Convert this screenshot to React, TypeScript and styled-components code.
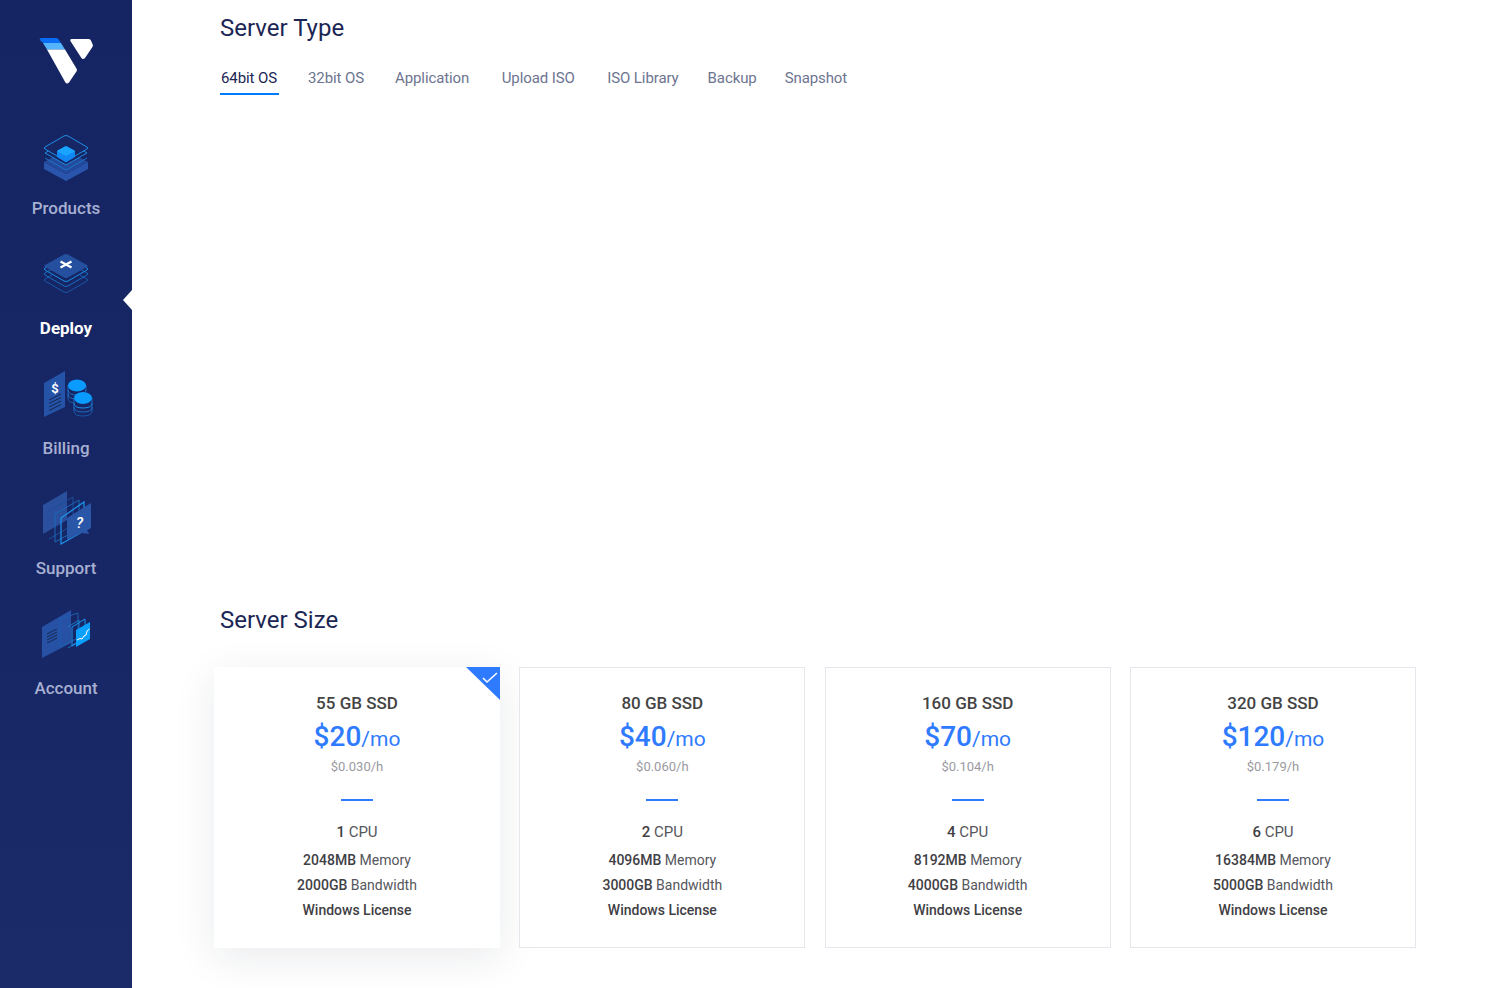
import React from "react";
import styled, { createGlobalStyle } from "styled-components";

const Global = createGlobalStyle`
  html, body { margin: 0; padding: 0; background: #fff; font-family: Roboto, "Liberation Sans", sans-serif; }
  body { overflow: hidden; }
`;

const Shell = styled.div`
  display: flex;
  height: 988px;
  width: 1500px;
`;

const Sidebar = styled.nav`
  width: 132px;
  flex: none;
  display: flex;
  flex-direction: column;
  background: linear-gradient(180deg, #152462 0%, #172664 60%, #1b2b69 100%);
`;

const LogoBox = styled.div`
  height: 120px;
  padding-top: 30px;
  box-sizing: border-box;
  display: flex;
  justify-content: center;
`;

const NavItem = styled.a<{ $active?: boolean }>`
  position: relative;
  height: 120px;
  box-sizing: border-box;
  padding-top: 5px;
  display: flex;
  flex-direction: column;
  align-items: center;
  font-size: 17px;
  font-weight: ${(p) => (p.$active ? 700 : 500)};
  line-height: 20px;
  color: ${(p) => (p.$active ? "#ffffff" : "#a7b0d2")};
  &::after {
    content: "";
    display: ${(p) => (p.$active ? "block" : "none")};
    position: absolute;
    right: 0;
    top: 50px;
    border-style: solid;
    border-width: 10px 9px 10px 0;
    border-color: transparent #ffffff transparent transparent;
  }
`;

const NavIcon = styled.svg`
  width: 70px;
  height: 60px;
  margin: 0 0 13px -2px;
  display: block;
  flex: none;
`;

const LogoSvg = styled.svg`
  width: 70px;
  height: 60px;
  display: block;
  margin-left: -2px;
`;

const Main = styled.main`
  flex: 1;
  padding: 14px 84px 0 88px;
  min-width: 0;
`;

const SectionTitle = styled.h2`
  margin: 0;
  font-size: 24px;
  font-weight: 400;
  line-height: 28px;
  color: #1b2654;
`;

const Tabs = styled.div`
  display: flex;
  margin-top: 20px;
  height: 33px;
`;

const Tab = styled.div<{ $active?: boolean; $gap: number }>`
  box-sizing: border-box;
  padding: 0 2px 0 1px;
  margin-right: ${(p) => p.$gap}px;
  height: 33px;
  line-height: 32px;
  font-size: 15px;
  letter-spacing: -0.1px;
  color: ${(p) => (p.$active ? "#1b2654" : "#6d7490")};
  border-bottom: 2px solid ${(p) => (p.$active ? "#007bfc" : "transparent")};
`;

const OsPanel = styled.div`
  height: 511px;
`;

const Plans = styled.div`
  display: grid;
  grid-template-columns: repeat(4, 286px);
  column-gap: 19.33px;
  margin: 33px 0 0 -6px;
`;

const Plan = styled.div<{ $selected?: boolean }>`
  position: relative;
  height: 281px;
  box-sizing: border-box;
  display: flex;
  flex-direction: column;
  align-items: center;
  background: #fff;
  border: ${(p) => (p.$selected ? "none" : "1px solid #e6e7ec")};
  box-shadow: ${(p) => (p.$selected ? "0 10px 40px rgba(20, 30, 60, 0.09)" : "none")};
  padding-top: ${(p) => (p.$selected ? 26 : 25)}px;
`;

const Corner = styled.svg`
  position: absolute;
  top: 0;
  right: 0;
  width: 34px;
  height: 33px;
`;

const Storage = styled.div`
  font-size: 17px;
  font-weight: 500;
  line-height: 20px;
  color: #444;
`;

const Price = styled.div`
  margin-top: 4px;
  height: 40px;
  line-height: 40px;
  color: #2f7bff;
  font-size: 21px;
  strong {
    font-size: 28px;
    font-weight: 500;
  }
`;

const Hourly = styled.div`
  margin-top: 2px;
  font-size: 13px;
  line-height: 16px;
  color: #9a9a9f;
`;

const Rule = styled.div`
  width: 32px;
  height: 2px;
  margin: 24px 0 19px;
  background: #2f7bff;
`;

const Spec = styled.div<{ $cpu?: boolean }>`
  font-size: ${(p) => (p.$cpu ? 15 : 14)}px;
  line-height: 25px;
  height: ${(p) => (p.$cpu ? 28 : 25)}px;
  color: #55565c;
  strong {
    font-weight: 500;
    color: #3f4045;
  }
`;

const Logo = () => (
  <LogoSvg viewBox="0 0 70 60">
    <path d="M12 8H26.5Q27.5 8 28.2 9L31 13H13.2L9.8 10Q9.2 8 12 8Z" fill="#0a6cf5" />
    <path d="M13 13H31L35 19.5H17Z" fill="#55b4ff" />
    <path d="M17 19.5H35L46.6 38.8Q47.4 40 46.6 41.2L39 52.4Q37 54.4 35.4 52.4Z" fill="#fff" />
    <path d="M41.5 9H58.5Q60 9 60.8 10.2L62.6 14.2Q63.4 15.8 62.4 17L55 28Q53 30 51.4 28L40.4 11Q39.8 9 41.5 9Z" fill="#fff" />
  </LogoSvg>
);

const Icon = ({ children }: { children: React.ReactNode }) => <NavIcon viewBox="0 0 70 60">{children}</NavIcon>;

const ProductsIcon = () => (
  <Icon>
    <path d="M14 37V44L36 56L58 44V37L36 49Z" fill="#2a55ad" />
    <path d="M14 37L36 25L58 37L36 49Z" fill="#234a9c" />
    <g fill="none" strokeWidth="1">
      <path d="M15 33L36 45L57 33" stroke="#1c73c8" />
      <path d="M15 28L36 40L57 28L36 16Z" stroke="#1c8ce0" fill="#172664" />
      <path d="M15 22L34 11Q36 10 38 11L57 22Q58.5 23 57 24L38 35Q36 36 34 35L15 24Q13.5 23 15 22Z" stroke="#1f8fe6" fill="#172664" />
    </g>
    <path d="M27 26V32L36 37.5L45 32V26L36 21Z" fill="#1087f2" />
    <path d="M27.6 25.6L35 21.4Q36 21 37 21.4L44.4 25.6Q45 26 44.4 26.6L37 30.6Q36 31 35 30.6L27.6 26.6Q27 26 27.6 25.6Z" fill="#18a4ff" />
  </Icon>
);

const DeployIcon = () => (
  <Icon>
    <g fill="none" strokeWidth="1">
      <path d="M15 36L34 47Q36 48 38 47L57 36Q58.5 35 57 34L50 30M15 34L22 30M15 34Q13.5 35 15 36" stroke="#1a58a8" />
      <path d="M15 30L34 41Q36 42 38 41L57 30Q58.5 29 57 28L50 24M15 28L22 24M15 28Q13.5 29 15 30" stroke="#1b6cc0" />
      <path d="M15 25L34 36Q36 37 38 36L57 25Q58.5 24 57 23L50 19M15 23L22 19M15 23Q13.5 24 15 25" stroke="#1c90e8" />
    </g>
    <path d="M15 20L34 9.6Q36 8.6 38 9.6L57 20Q58.5 21 57 22L38 32.4Q36 33.4 34 32.4L15 22Q13.5 21 15 20Z" fill="#25509f" />
    <path d="M30.5 16.5L41.5 22.5M41.5 16.5L30.5 22.5" stroke="#fff" strokeWidth="2.2" />
  </Icon>
);

const BillingIcon = () => (
  <Icon>
    <path d="M14 18L35 6V42L14 52Z" fill="#2553a8" />
    <text x="25" y="28" fontFamily="Roboto, sans-serif" fontSize="13" fontWeight="700" fill="#fff" textAnchor="middle">$</text>
    <path d="M19 35L31 29M19 38.5L31 32.5M19 42L31 36M19 45.5L31 39.5" stroke="#15254f" strokeWidth="1" fill="none" />
    <g fill="none" stroke="#1c6cc0" strokeWidth="1">
      <path d="M38 25Q38 30 47 30T56 25" />
      <path d="M38 29Q38 34 47 34T56 29" />
      <path d="M38 33Q38 38 45 38" stroke="#1a58a8" />
      <path d="M38 20V33M56 20V26" />
    </g>
    <ellipse cx="47" cy="20.5" rx="9" ry="6" fill="#0a9bff" />
    <path d="M44 33V46Q44 51 53 51T62 46V33" fill="#172664" />
    <g fill="none" stroke="#1c6cc0" strokeWidth="1">
      <path d="M44 38Q44 43 53 43T62 38" stroke="#1c90e8" />
      <path d="M44 42Q44 47 53 47T62 42" />
      <path d="M44 46Q44 51 53 51T62 46" stroke="#1a58a8" />
      <path d="M44 33V46M62 33V46" />
    </g>
    <ellipse cx="53" cy="33" rx="9" ry="6" fill="#0a9bff" />
  </Icon>
);

const SupportIcon = () => (
  <Icon>
    <path d="M13 20L37 6V35L13 49Z" fill="#2a4f9c" />
    <path d="M19 26L43 12V40L19 54" fill="none" stroke="#1d4f9a" strokeWidth="1" />
    <path d="M25 29L49 15V44L25 57Z" fill="none" stroke="#1b68ba" strokeWidth="1" />
    <path d="M31 33L54 17V46L31 59Z" fill="none" stroke="#1c96ee" strokeWidth="1.2" />
    <path d="M37 33L61 18V43L57 45.5L59.5 49L51 48L37 55Z" fill="#2a56a8" />
    <text x="49.5" y="43" fontFamily="Roboto, sans-serif" fontSize="15" fontWeight="500" fontStyle="italic" fill="#fff" textAnchor="middle">?</text>
  </Icon>
);

const AccountIcon = () => (
  <Icon>
    <path d="M12 22L41 5V38L12 53Z" fill="#2751a4" />
    <path d="M30 14L48 8V33L30 42Z" fill="none" stroke="#1d5fb0" strokeWidth="1" />
    <path d="M38 22L49 15V36L38 43" fill="none" stroke="#1b78cc" strokeWidth="1" />
    <path d="M42 22L55 14V33L42 41Z" fill="none" stroke="#1c96ee" strokeWidth="1" />
    <path d="M46 25L60 17V34L46 42Z" fill="#0aa0ff" />
    <path d="M47 35L50 33.5L52 34L54 31L56 30L57 26L59.5 24" fill="none" stroke="#fff" strokeWidth="1" />
    <path d="M17 29L27 24M17 32L27 27M17 35L27 30M17 38L27 33" stroke="#16284f" strokeWidth="1" fill="none" />
  </Icon>
);

const navItems = [
  { label: "Products", icon: <ProductsIcon /> },
  { label: "Deploy", icon: <DeployIcon />, active: true },
  { label: "Billing", icon: <BillingIcon /> },
  { label: "Support", icon: <SupportIcon /> },
  { label: "Account", icon: <AccountIcon /> },
];

const tabs: [string, number][] = [
  ["64bit OS", 28],
  ["32bit OS", 28],
  ["Application", 29.5],
  ["Upload ISO", 29.5],
  ["ISO Library", 26],
  ["Backup", 25],
  ["Snapshot", 0],
];

const plans = [
  { ssd: "55 GB SSD", price: "$20", hr: "$0.030/h", cpu: 1, mem: "2048MB", bw: "2000GB", selected: true },
  { ssd: "80 GB SSD", price: "$40", hr: "$0.060/h", cpu: 2, mem: "4096MB", bw: "3000GB" },
  { ssd: "160 GB SSD", price: "$70", hr: "$0.104/h", cpu: 4, mem: "8192MB", bw: "4000GB" },
  { ssd: "320 GB SSD", price: "$120", hr: "$0.179/h", cpu: 6, mem: "16384MB", bw: "5000GB" },
];

export default function App() {
  return (
    <Shell>
      <Global />
      <Sidebar>
        <LogoBox>
          <Logo />
        </LogoBox>
        {navItems.map((n) => (
          <NavItem key={n.label} $active={n.active}>
            {n.icon}
            {n.label}
          </NavItem>
        ))}
      </Sidebar>
      <Main>
        <SectionTitle>Server Type</SectionTitle>
        <Tabs>
          {tabs.map(([t, gap], i) => (
            <Tab key={t} $active={i === 0} $gap={gap}>
              {t}
            </Tab>
          ))}
        </Tabs>
        <OsPanel />
        <SectionTitle>Server Size</SectionTitle>
        <Plans>
          {plans.map((p) => (
            <Plan key={p.ssd} $selected={p.selected}>
              {p.selected && (
                <Corner viewBox="0 0 34 33">
                  <path d="M0 0H34V33Z" fill="#2f7bff" />
                  <path d="M17 11L21 15L31 6" fill="none" stroke="#fff" strokeWidth="1.6" />
                </Corner>
              )}
              <Storage>{p.ssd}</Storage>
              <Price>
                <strong>{p.price}</strong>/mo
              </Price>
              <Hourly>{p.hr}</Hourly>
              <Rule />
              <Spec $cpu>
                <strong>{p.cpu}</strong> CPU
              </Spec>
              <Spec>
                <strong>{p.mem}</strong> Memory
              </Spec>
              <Spec>
                <strong>{p.bw}</strong> Bandwidth
              </Spec>
              <Spec>
                <strong>Windows License</strong>
              </Spec>
            </Plan>
          ))}
        </Plans>
      </Main>
    </Shell>
  );
}
